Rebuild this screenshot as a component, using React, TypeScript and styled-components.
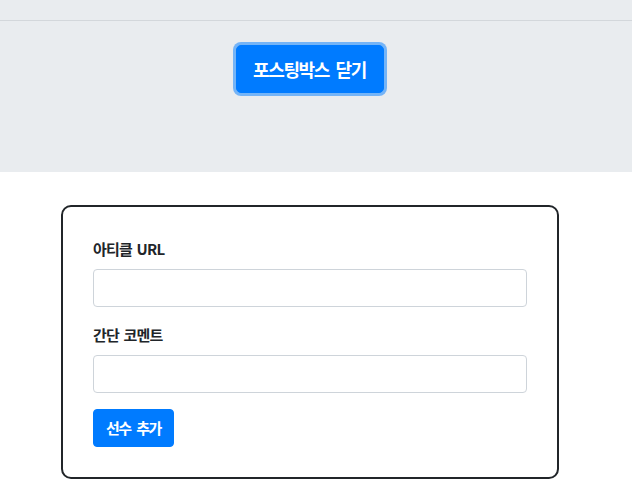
import styled, { createGlobalStyle } from "styled-components";

const GlobalStyle = createGlobalStyle`
  * {
    box-sizing: border-box;
  }
  body {
    margin: 0;
    background-color: #ffffff;
    color: #212529;
    font-family: "Noto Sans CJK KR", "Noto Sans", sans-serif;
  }
`;

export default function App() {
  return (
    <>
      <GlobalStyle />
      <StyledTopSection>
        <StyledTopStrip />
        <StyledToggleButton>포스팅박스 닫기</StyledToggleButton>
      </StyledTopSection>
      <StyledMain>
        <StyledCard>
          <StyledFormGroup>
            <StyledLabel htmlFor="article-url">아티클 URL</StyledLabel>
            <StyledInput id="article-url" type="text" />
          </StyledFormGroup>
          <StyledFormGroup>
            <StyledLabel htmlFor="comment">간단 코멘트</StyledLabel>
            <StyledInput id="comment" type="text" />
          </StyledFormGroup>
          <StyledSubmitButton>선수 추가</StyledSubmitButton>
        </StyledCard>
      </StyledMain>
    </>
  );
}

const StyledTopSection = styled.section`
  background-color: #e9ecef;
  height: 172px;
  display: flex;
  flex-direction: column;
  align-items: center;
`;

const StyledTopStrip = styled.div`
  width: 100%;
  height: 21px;
  border-bottom: 1px solid #d3d7db;
  margin-bottom: 24px;
`;

const StyledToggleButton = styled.button`
  font-family: inherit;
  font-size: 18px;
  font-weight: 700;
  line-height: 30px;
  letter-spacing: -1.4px;
  word-spacing: 4px;
  color: #ffffff;
  background-color: #007bff;
  border: 1px solid #007bff;
  border-radius: 5px;
  padding: 8px 17px 8px 16px;
  margin-right: 12px;
  box-shadow: 0 0 0 3px rgba(0, 123, 255, 0.5);
  cursor: pointer;
`;

const StyledMain = styled.main`
  padding: 33px 0 20px 61px;
`;

const StyledCard = styled.div`
  width: 498px;
  border: 2px solid #212529;
  border-radius: 10px;
  padding: 30px;
  background-color: #ffffff;
`;

const StyledFormGroup = styled.div`
  display: flex;
  flex-direction: column;
  margin-bottom: 16px;
`;

const StyledLabel = styled.label`
  font-size: 15px;
  font-weight: 700;
  line-height: 24px;
  letter-spacing: -0.8px;
  word-spacing: 2px;
  margin-bottom: 8px;
  color: #212529;
`;

const StyledInput = styled.input`
  width: 100%;
  height: 38px;
  border: 1px solid #ced4da;
  border-radius: 4px;
  padding: 6px 12px;
  font-size: 16px;
  font-family: inherit;
  background-color: #ffffff;
`;

const StyledSubmitButton = styled.button`
  font-family: inherit;
  font-size: 15px;
  font-weight: 700;
  line-height: 24px;
  letter-spacing: -1.6px;
  word-spacing: 4px;
  color: #ffffff;
  background-color: #007bff;
  border: 1px solid #007bff;
  border-radius: 4px;
  padding: 6px 12px;
  cursor: pointer;
`;
